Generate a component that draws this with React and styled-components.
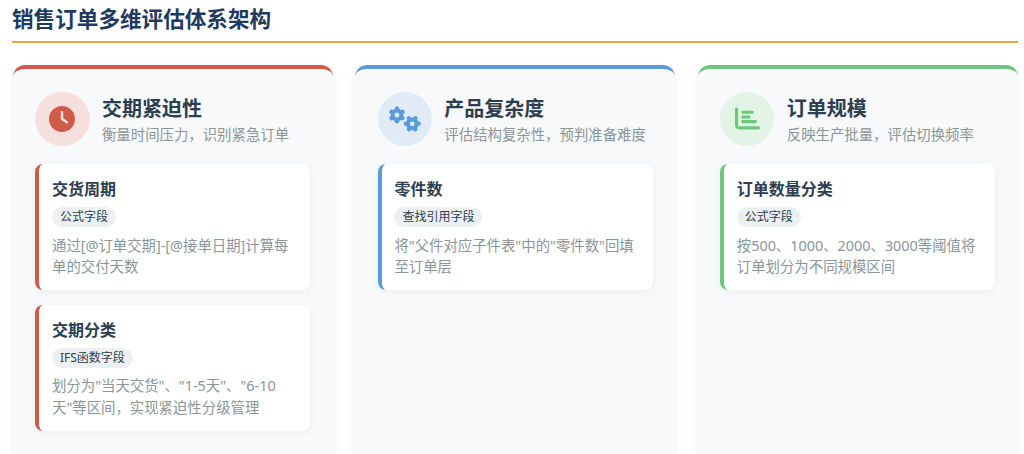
import React from 'react';
import styled, { createGlobalStyle } from 'styled-components';
import { FaClock, FaGears, FaChartBar } from 'react-icons/fa6';

const GlobalStyle = createGlobalStyle`
  html, body {
    margin: 0;
    height: 454px;
    overflow: hidden;
    background: #fff;
    font-family: "Noto Sans", "Noto Sans CJK SC", sans-serif;
  }
`;

const Page = styled.div`
  height: 454px;
  overflow: hidden;
  padding: 0 6.4px 0 12.8px;
`;

const Heading = styled.h1`
  margin: 0 0 0 -0.8px;
  height: 43px;
  box-sizing: border-box;
  padding-top: 4px;
  font-size: 21.6px;
  line-height: 30px;
  font-weight: 700;
  color: #1f3a5f;
  border-bottom: 2px solid #eba640;
`;

const Columns = styled.div`
  display: grid;
  grid-template-columns: repeat(3, 1fr);
  gap: 22.4px;
  margin-top: 22.4px;
`;

const Column = styled.section`
  min-height: 420px;
  box-sizing: border-box;
  padding: 22.4px;
  background: #f8f9fb;
  border-top: 4.8px solid ${({ $color }) => $color};
  border-radius: 12px;
  box-shadow: 0 4px 12px rgba(0, 0, 0, 0.05);
`;

const ColumnHeader = styled.header`
  display: flex;
  align-items: center;
  gap: 12.4px;
  margin-bottom: 17.6px;
`;

const IconCircle = styled.div`
  flex: none;
  width: 54.4px;
  height: 54.4px;
  border-radius: 50%;
  display: flex;
  align-items: center;
  justify-content: center;
  font-size: ${({ $size }) => $size}px;
  color: ${({ $color }) => $color};
  background: ${({ $bg }) => $bg};
`;

const ColumnText = styled.div`
  padding-top: 3px;
`;

const ColumnTitle = styled.h2`
  margin: 0;
  font-size: 20px;
  line-height: 26px;
  font-weight: 700;
  color: #2c3e50;
`;

const ColumnSub = styled.p`
  margin: 2px 0 0;
  font-size: 14.4px;
  line-height: 21.6px;
  color: #8a9698;
`;

const Items = styled.div`
  display: flex;
  flex-direction: column;
  gap: 14.4px;
`;

const Item = styled.article`
  box-sizing: border-box;
  padding: 13px 12.8px 12.4px;
  background: #fff;
  border-left: 4px solid ${({ $color }) => $color};
  border-radius: 8px;
  box-shadow: 0 2px 8px rgba(0, 0, 0, 0.05);
`;

const ItemTitle = styled.h3`
  margin: 0;
  font-size: 16px;
  line-height: 24px;
  font-weight: 700;
  color: #2c3e50;
`;

const Tag = styled.span`
  display: block;
  width: fit-content;
  margin-top: 6px;
  padding: 0 8px;
  height: 20.4px;
  line-height: 20.4px;
  font-size: 12px;
  color: #2c3e50;
  background: #ecf0f1;
  border-radius: 10.2px;
`;

const ItemText = styled.p`
  margin: 7.4px 0 0;
  font-size: 14.4px;
  line-height: 21.6px;
  color: #8a9698;
`;

const groups = [
  {
    title: '交期紧迫性',
    sub: '衡量时间压力，识别紧急订单',
    color: '#cf5b48',
    bg: '#f5e0de',
    Icon: FaClock,
    size: 26,
    items: [
      { title: '交货周期', tag: '公式字段', text: '通过[@订单交期]-[@接单日期]计算每单的交付天数' },
      { title: '交期分类', tag: 'IFS函数字段', text: '划分为"当天交货"、"1-5天"、"6-10天"等区间，实现紧迫性分级管理' },
    ],
  },
  {
    title: '产品复杂度',
    sub: '评估结构复杂性，预判准备难度',
    color: '#5b9bdc',
    bg: '#e1ebf6',
    Icon: FaGears,
    size: 32,
    items: [
      { title: '零件数', tag: '查找引用字段', text: '将"父件对应子件表"中的"零件数"回填至订单层' },
    ],
  },
  {
    title: '订单规模',
    sub: '反映生产批量，评估切换频率',
    color: '#6cc77a',
    bg: '#e3f3e6',
    Icon: FaChartBar,
    size: 25,
    items: [
      { title: '订单数量分类', tag: '公式字段', text: '按500、1000、2000、3000等阈值将订单划分为不同规模区间' },
    ],
  },
];

export default function App() {
  return (
    <Page>
      <GlobalStyle />
      <Heading>销售订单多维评估体系架构</Heading>
      <Columns>
        {groups.map(({ title, sub, color, bg, Icon, size, items }) => (
          <Column key={title} $color={color}>
            <ColumnHeader>
              <IconCircle $color={color} $bg={bg} $size={size}>
                <Icon />
              </IconCircle>
              <ColumnText>
                <ColumnTitle>{title}</ColumnTitle>
                <ColumnSub>{sub}</ColumnSub>
              </ColumnText>
            </ColumnHeader>
            <Items>
              {items.map((item) => (
                <Item key={item.title} $color={color}>
                  <ItemTitle>{item.title}</ItemTitle>
                  <Tag>{item.tag}</Tag>
                  <ItemText>{item.text}</ItemText>
                </Item>
              ))}
            </Items>
          </Column>
        ))}
      </Columns>
    </Page>
  );
}
